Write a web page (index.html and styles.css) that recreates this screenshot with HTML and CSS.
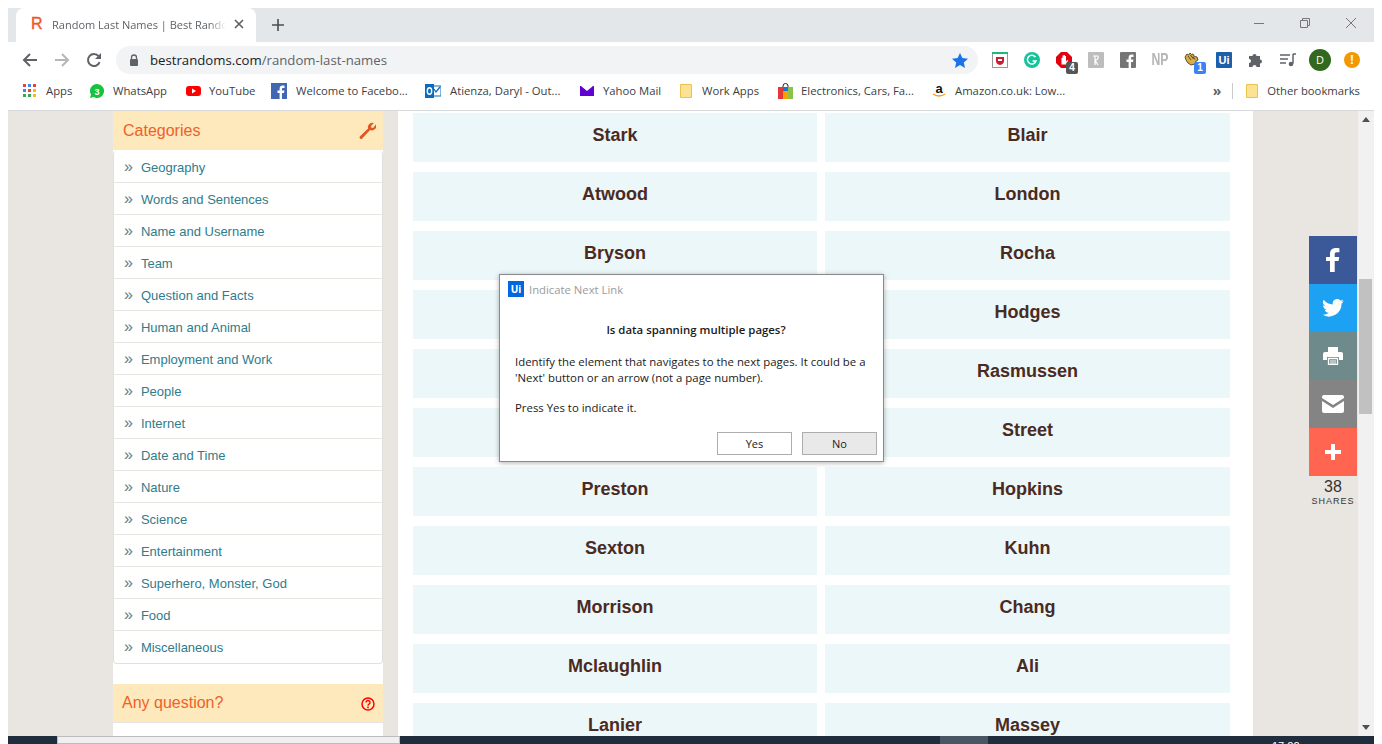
FILE: index.html
```html
<!DOCTYPE html>
<html lang="en">
<head>
    <meta charset="UTF-8">
    <title>Random Last Names | Best Randoms</title>
    <link rel="stylesheet" href="styles.css">
</head>
<body>
    <div class="window">
        <div class="tabstrip">
            <div class="tab">
                <span class="tab-favicon">R</span>
                <span class="tab-title">Random Last Names | Best Randoms</span>
                <svg class="tab-close" width="10" height="10" viewBox="0 0 10 10"><path d="M1 1l8 8M9 1l-8 8" stroke="#5f6368" stroke-width="1.7"/></svg>
            </div>
            <svg class="new-tab" width="12" height="12" viewBox="0 0 12 12"><path d="M6 0v12M0 6h12" stroke="#4a4d51" stroke-width="1.6"/></svg>
            <div class="win-controls">
                <svg width="12" height="12" viewBox="0 0 12 12"><path d="M1 6.5h10" stroke="#777" stroke-width="1"/></svg>
                <svg width="12" height="12" viewBox="0 0 12 12"><path d="M1.5 3.5h7v7h-7zM3.5 3.5v-2h7v7h-2" fill="none" stroke="#777" stroke-width="1"/></svg>
                <svg width="12" height="12" viewBox="0 0 12 12"><path d="M1 1l10 10M11 1L1 11" stroke="#777" stroke-width="1"/></svg>
            </div>
        </div>

        <div class="toolbar">
            <svg class="nav-btn" width="16" height="16" viewBox="0 0 16 16"><path d="M15 8H2M8 2L2 8l6 6" fill="none" stroke="#5f6368" stroke-width="2"/></svg>
            <svg class="nav-btn" width="16" height="16" viewBox="0 0 16 16"><path d="M1 8h13M8 2l6 6-6 6" fill="none" stroke="#b4b6b9" stroke-width="2"/></svg>
            <svg class="nav-btn" width="16" height="16" viewBox="0 0 16 16"><path d="M13.6 10.2A6 6 0 1 1 12.6 4.2" fill="none" stroke="#5f6368" stroke-width="2"/><path d="M15 1v6H9z" fill="#5f6368"/></svg>
            <div class="omnibox">
                <svg class="lock" width="10" height="12" viewBox="0 0 10 12"><path d="M2.5 5V3.5a2.5 2.5 0 0 1 5 0V5" fill="none" stroke="#5f6368" stroke-width="1.3"/><rect x="1" y="5" width="8" height="7" rx="1" fill="#5f6368"/></svg>
                <span class="url"><span class="url-host">bestrandoms.com</span>/random-last-names</span>
                <svg class="star" width="16" height="15" viewBox="0 0 16 15"><path d="M8 0l2.4 5.1 5.6.6-4.2 3.7 1.2 5.6L8 11.9 3 14.9l1.2-5.5L0 5.7l5.6-.6z" fill="#1a73e8"/></svg>
            </div>
            <div class="extensions">
                <span class="ext">
                    <svg width="16" height="16" viewBox="0 0 16 16"><rect x=".5" y=".5" width="15" height="15" fill="#fff" stroke="#999"/><rect width="16" height="2" fill="#1fb879"/><path d="M4 5h8v4q0 3-4 4-4-1-4-4z" fill="#c8202f"/><path d="M6 7h4v2H6z" fill="#fff"/></svg>
                </span>
                <span class="ext">
                    <svg width="16" height="16" viewBox="0 0 16 16"><circle cx="8" cy="8" r="8" fill="#15c39a"/><path d="M11.5 5.2A4.4 4.4 0 1 0 12 9H8.6" fill="none" stroke="#fff" stroke-width="1.5"/></svg>
                </span>
                <span class="ext">
                    <svg width="16" height="16" viewBox="0 0 16 16"><path d="M5 0h6l5 5v6l-5 5H5l-5-5V5z" fill="#e3000f"/><path d="M5.5 12.5V6h1v2.5V3.5h1.2V8V3h1.2v5V4h1.1v5.5l1.3-1.5 1 .6-2.3 3.9z" fill="#fff"/></svg>
                    <span class="badge badge-dark">4</span>
                </span>
                <span class="ext">
                    <svg width="16" height="16" viewBox="0 0 16 16"><rect width="16" height="16" rx="1" fill="#bdbdbd"/><path d="M5 4h5M7 4v9M7 8l3 5M7 8q4 0 3-4" fill="none" stroke="#fff" stroke-width="1.2"/></svg>
                </span>
                <span class="ext">
                    <svg width="16" height="16" viewBox="0 0 16 16"><rect width="16" height="16" rx="1" fill="#757575"/><path d="M11 16v-6h2l.4-2.4H11V6.2c0-.8.3-1.2 1.2-1.2h1.3V2.8C13 2.7 12.3 2.6 11.6 2.6 9.8 2.6 8.6 3.7 8.6 5.8v1.8H6.5V10h2.1v6z" fill="#fff"/></svg>
                </span>
                <span class="ext ext-np">NP</span>
                <span class="ext">
                    <svg width="16" height="16" viewBox="0 0 16 16"><path d="M1 5l2-3 1.5 1L6 1l1.5 1.5L9 2l1.5 2.5L13 5l1 3-2 1-1 3-4 1-3-2-2-3z" fill="#d8ad4a" stroke="#4d3f1c" stroke-width=".9"/><path d="M4 4l3 4M6.5 3l3 4M9 4.5l2 3" stroke="#4d3f1c" stroke-width=".9"/></svg>
                    <span class="badge badge-blue">1</span>
                </span>
                <span class="ext">
                    <span class="ui-logo ui-logo-ext">Ui</span>
                </span>
                <span class="ext">
                    <svg width="16" height="16" viewBox="0 0 16 16"><path d="M1 5h3.5a2 2 0 1 1 4 0H12v3.5a2 2 0 1 1 0 4V16H8.5a2 2 0 1 0-4 0H1v-4a2 2 0 1 0 0-4z" fill="#5f6368" transform="translate(0 -1)"/></svg>
                </span>
                <span class="ext">
                    <svg width="16" height="14" viewBox="0 0 16 14"><path d="M0 2h10M0 6h8M0 10h6" stroke="#5f6368" stroke-width="1.3"/><path d="M13 1v9.5" stroke="#5f6368" stroke-width="1.5"/><path d="M13 1h3" stroke="#5f6368" stroke-width="1.5"/><circle cx="11" cy="11" r="2.3" fill="#5f6368"/></svg>
                </span>
                <span class="ext"><span class="avatar">D</span></span>
                <span class="ext"><span class="update-dot">!</span></span>
            </div>
        </div>

        <div class="bookmarks">
            <a class="bm bm-apps">
                <svg width="14" height="14" viewBox="0 0 14 14">
                    <rect x="0" y="0" width="3" height="3" fill="#ea4335"/><rect x="5" y="0" width="3" height="3" fill="#4285f4"/><rect x="10" y="0" width="3" height="3" fill="#ea4335"/>
                    <rect x="0" y="5" width="3" height="3" fill="#4285f4"/><rect x="5" y="5" width="3" height="3" fill="#ea4335"/><rect x="10" y="5" width="3" height="3" fill="#fbbc05"/>
                    <rect x="0" y="10" width="3" height="3" fill="#34a853"/><rect x="5" y="10" width="3" height="3" fill="#34a853"/><rect x="10" y="10" width="3" height="3" fill="#fbbc05"/>
                </svg>
                Apps
            </a>
            <a class="bm bm-whatsapp">
                <svg width="14" height="14" viewBox="0 0 14 14"><path d="M7 0a7 7 0 1 1-3.4 13.1L0 14l1-3.4A7 7 0 0 1 7 0z" fill="#18c23e"/><text x="7" y="10.5" class="icon-digit">3</text></svg>
                WhatsApp
            </a>
            <a class="bm bm-youtube">
                <svg width="15" height="14" viewBox="0 0 15 14"><rect y="2" width="15" height="10" rx="3" fill="#f00"/><path d="M6 4.5L10 7l-4 2.5z" fill="#fff"/></svg>
                YouTube
            </a>
            <a class="bm bm-facebook">
                <svg width="16" height="16" viewBox="0 0 16 16"><rect width="16" height="16" fill="#4267b2"/><path d="M11 16v-6h2l.4-2.4H11V6.2c0-.8.3-1.2 1.2-1.2h1.3V2.8C13 2.7 12.3 2.6 11.6 2.6 9.8 2.6 8.6 3.7 8.6 5.8v1.8H6.5V10h2.1v6z" fill="#fff"/></svg>
                Welcome to Facebo...
            </a>
            <a class="bm bm-outlook">
                <svg width="16" height="16" viewBox="0 0 16 16"><rect x="7" y="3" width="9" height="10" fill="#fff" stroke="#0a6cc0"/><path d="M9 6l2 3 4-5" fill="none" stroke="#0a6cc0" stroke-width="1.3"/><rect y="1" width="9" height="14" fill="#0a6cc0"/><ellipse cx="4.5" cy="8" rx="2.2" ry="3.2" fill="none" stroke="#fff" stroke-width="1.4"/></svg>
                Atienza, Daryl - Out...
            </a>
            <a class="bm bm-yahoo">
                <svg width="14" height="12" viewBox="0 0 14 12"><rect y="1" width="14" height="10" fill="#6001d2"/><path d="M1 1l6 5 6-5z" fill="#fff"/></svg>
                Yahoo Mail
            </a>
            <a class="bm bm-folder">
                <svg width="12" height="14" viewBox="0 0 12 14"><path class="folder-shape" d="M.5.5h11v13H.5z"/></svg>
                Work Apps
            </a>
            <a class="bm bm-bag">
                <svg width="15" height="16" viewBox="0 0 15 16"><path d="M5 5V3a2.5 2.5 0 0 1 5 0v2" fill="none" stroke="#222" stroke-width="1"/><rect y="4" width="5" height="12" fill="#e53935"/><rect x="5" y="4" width="5" height="12" fill="#1976d2"/><rect x="10" y="4" width="5" height="12" fill="#8bc34a"/><rect x="5" y="8" width="5" height="8" fill="#ffa000"/></svg>
                Electronics, Cars, Fa...
            </a>
            <a class="bm bm-amazon">
                <svg width="14" height="16" viewBox="0 0 14 16"><text x="7" y="10" class="icon-amazon">a</text><path d="M1 11q6 4 12 0" fill="none" stroke="#f90" stroke-width="1.3"/></svg>
                Amazon.co.uk: Low...
            </a>
            <span class="bm-spacer"></span>
            <span class="bm-more">&raquo;</span>
            <span class="bm-sep"></span>
            <a class="bm bm-other">
                <svg width="12" height="14" viewBox="0 0 12 14"><path class="folder-shape" d="M.5.5h11v13H.5z"/></svg>
                Other bookmarks
            </a>
        </div>

        <div class="viewport">
            <div class="page">
                <aside class="sidebar">
                    <div class="panel-head">
                        <span>Categories</span>
                        <svg width="17" height="17" viewBox="0 0 16 16"><path d="M1 13.5L8.5 6a4.2 4.2 0 0 1 5.500-5l-2.700 2.700.4 1.600 1.600.4L16 2a4.200 4.200 0 0 1-5.500 5.500L3 15.500a1.400 1.400 0 0 1-2-2z" fill="#e2571e"/></svg>
                    </div>
                    <ul class="cat-list">
                        <li>Geography</li>
                        <li>Words and Sentences</li>
                        <li>Name and Username</li>
                        <li>Team</li>
                        <li>Question and Facts</li>
                        <li>Human and Animal</li>
                        <li>Employment and Work</li>
                        <li>People</li>
                        <li>Internet</li>
                        <li>Date and Time</li>
                        <li>Nature</li>
                        <li>Science</li>
                        <li>Entertainment</li>
                        <li>Superhero, Monster, God</li>
                        <li>Food</li>
                        <li>Miscellaneous</li>
                    </ul>
                    <div class="panel-head panel-question">
                        <span>Any question?</span>
                        <svg class="question-icon" width="14" height="14" viewBox="0 0 14 14"><circle cx="7" cy="7" r="6" fill="none" stroke="#f00" stroke-width="1.5"/><path d="M5 5.500a2 2 0 1 1 3 1.700c-.7.400-1 .8-1 1.500" fill="none" stroke="#f00" stroke-width="1.4"/><rect x="6.2" y="9.6" width="1.6" height="1.6" fill="#f00"/></svg>
                    </div>
                </aside>
                <main class="results">
                    <div class="name-card">Stark</div><div class="name-card">Blair</div>
                    <div class="name-card">Atwood</div><div class="name-card">London</div>
                    <div class="name-card">Bryson</div><div class="name-card">Rocha</div>
                    <div class="name-card"></div><div class="name-card">Hodges</div>
                    <div class="name-card"></div><div class="name-card">Rasmussen</div>
                    <div class="name-card"></div><div class="name-card">Street</div>
                    <div class="name-card">Preston</div><div class="name-card">Hopkins</div>
                    <div class="name-card">Sexton</div><div class="name-card">Kuhn</div>
                    <div class="name-card">Morrison</div><div class="name-card">Chang</div>
                    <div class="name-card">Mclaughlin</div><div class="name-card">Ali</div>
                    <div class="name-card">Lanier</div><div class="name-card">Massey</div>
                </main>
            </div>

            <div class="scrollbar">
                <span class="arrow-up"></span>
                <span class="thumb"></span>
                <span class="arrow-down"></span>
            </div>

            <div class="share-bar">
                <a class="share share-fb">
                    <svg width="14" height="24" viewBox="0 0 14 24"><path d="M4 24V13H0V9h4V6c0-4 2.4-6 5.8-6 1.700 0 3.200.1 3.600.2v4h-2.500C9 4.200 8.700 5.100 8.700 6.400V9h4.500l-.6 4H8.700v11z" fill="#fff"/></svg>
                </a>
                <a class="share share-tw">
                    <svg width="22" height="18" viewBox="0 0 24 20"><path d="M24 2.4a10 10 0 0 1-2.8.8A5 5 0 0 0 23.3.5a10 10 0 0 1-3.1 1.2 4.900 4.900 0 0 0-8.400 4.500A14 14 0 0 1 1.700.9a4.900 4.900 0 0 0 1.500 6.600 5 5 0 0 1-2.200-.6 4.900 4.900 0 0 0 3.900 4.900 5 5 0 0 1-2.200.1 4.900 4.900 0 0 0 4.600 3.400A9.900 9.900 0 0 1 0 17.300 14 14 0 0 0 21.500 5q1.500-1.100 2.500-2.600z" fill="#fff"/></svg>
                </a>
                <a class="share share-print">
                    <svg width="20" height="18" viewBox="0 0 20 18"><path d="M5 0h10v5H5z" fill="#fff"/><path d="M2 5h16a2 2 0 0 1 2 2v6h-4V10H4v3H0V7a2 2 0 0 1 2-2z" fill="#fff"/><path d="M5.5 11.5h9v6h-9z" fill="none" stroke="#fff" stroke-width="1.3"/><path d="M7 14h6M7 16h6" stroke="#fff"/></svg>
                </a>
                <a class="share share-mail">
                    <svg width="22" height="18" viewBox="0 0 22 18"><path d="M2 0h18a2 2 0 0 1 2 2v1l-11 7L0 3V2a2 2 0 0 1 2-2zM0 6l11 7 11-7v10a2 2 0 0 1-2 2H2a2 2 0 0 1-2-2z" fill="#fff"/></svg>
                </a>
                <a class="share share-more">
                    <svg width="16" height="16" viewBox="0 0 16 16"><path d="M6 0h4v6h6v4h-6v6H6v-6H0V6h6z" fill="#fff"/></svg>
                </a>
                <div class="share-count">38</div>
                <div class="share-label">SHARES</div>
            </div>

            <div class="dialog">
                <div class="dialog-title">
                    <span class="ui-logo">Ui</span>
                    <span>Indicate Next Link</span>
                </div>
                <div class="dialog-body">
                    <p class="dialog-question">Is data spanning multiple pages?</p>
                    <p>Identify the element that navigates to the next pages. It could be a<br>'Next' button or an arrow (not a page number).</p>
                    <p>Press Yes to indicate it.</p>
                </div>
                <div class="dialog-actions">
                    <button class="dlg-btn">Yes</button>
                    <button class="dlg-btn dlg-btn-no">No</button>
                </div>
            </div>
        </div>

        <div class="taskbar">
            <span class="task-search"></span>
            <span class="task-active"></span>
            <span class="task-clock">17:22</span>
        </div>
    </div>
</body>
</html>
```

FILE: styles.css
```css
* {
    box-sizing: border-box;
}
html, body {
    margin: 0;
    height: 100%;
    overflow: hidden;
    background: #fff;
}
body {
    padding: 8px 8px 0 8px;
    font-family: "Liberation Sans", Arial, sans-serif;
}
.window {
    height: 736px;
    display: flex;
    flex-direction: column;
    position: relative;
}

/* tab strip */
.tabstrip {
    height: 34px;
    background: #e4e7ea;
    display: flex;
    align-items: center;
    padding-left: 8px;
    flex: none;
}
.tab {
    width: 240px;
    height: 34px;
    background: #fff;
    border-radius: 8px 8px 0 0;
    display: flex;
    align-items: center;
    padding: 0 12px 2px 15px;
    font-family: "Open Sans", sans-serif;
    font-size: 11px;
    color: #5f6368;
}
.tab-favicon {
    font-family: "Liberation Sans", sans-serif;
    font-size: 16px;
    color: #f0562b;
    -webkit-text-stroke: .4px #f0562b;
    width: 14px;
    margin-right: 7px;
}
.tab-title {
    flex: 1;
    overflow: hidden;
    white-space: nowrap;
    -webkit-mask-image: linear-gradient(to right, #000 90%, transparent);
    mask-image: linear-gradient(to right, #000 90%, transparent);
}
.tab-close {
    margin-left: 8px;
}
.new-tab {
    margin-left: 16px;
}
.win-controls {
    margin-left: auto;
    display: flex;
    gap: 34px;
    padding-right: 17px;
    margin-top: -5px;
}

/* toolbar */
.toolbar {
    height: 36px;
    background: #fff;
    display: flex;
    align-items: center;
    padding-left: 14px;
    flex: none;
}
.nav-btn {
    margin-right: 16px;
}
.omnibox {
    width: 862px;
    height: 28px;
    margin-left: -2px;
    background: #f1f3f4;
    border-radius: 14px;
    display: flex;
    align-items: center;
    padding: 0 10px 0 13px;
}
.lock {
    margin-right: 11px;
}
.url {
    font-family: "Open Sans", sans-serif;
    font-size: 13.2px;
    color: #5f6368;
    flex: 1;
}
.url-host {
    color: #202124;
}
.extensions {
    display: flex;
    margin-left: 6px;
}
.ext {
    width: 32px;
    height: 28px;
    display: flex;
    align-items: center;
    justify-content: center;
    position: relative;
}
.ext-np {
    font-family: "Liberation Sans", sans-serif;
    font-weight: bold;
    font-size: 17px;
    color: #b5b5b5;
    transform: scaleX(.72);
}
.badge {
    position: absolute;
    right: 2px;
    bottom: 0;
    width: 12px;
    height: 12px;
    border-radius: 2px;
    color: #fff;
    font-size: 10px;
    font-weight: bold;
    line-height: 12px;
    text-align: center;
}
.badge-dark {
    background: #555;
}
.badge-blue {
    background: #3b82f6;
}
.ui-logo {
    width: 16px;
    height: 16px;
    background: #0067df;
    color: #fff;
    font-size: 10px;
    font-weight: bold;
    line-height: 16px;
    text-align: center;
    flex: none;
}
.ui-logo-ext {
    background: #1c5ea8;
    border-radius: 1px;
    font-size: 11px;
}
.avatar {
    width: 22px;
    height: 22px;
    border-radius: 50%;
    background: #33691e;
    color: #fff;
    font-family: "Open Sans", sans-serif;
    font-size: 11px;
    line-height: 22px;
    text-align: center;
}
.update-dot {
    width: 16px;
    height: 16px;
    border-radius: 50%;
    background: #f29900;
    color: #fff;
    font-size: 12px;
    font-weight: bold;
    line-height: 16px;
    text-align: center;
}

/* bookmarks bar */
.bookmarks {
    height: 33px;
    background: #fff;
    border-bottom: 1px solid #d7d9db;
    display: flex;
    align-items: center;
    padding-bottom: 7px;
    font-family: "Open Sans", sans-serif;
    font-size: 11.3px;
    color: #3c4043;
    flex: none;
    white-space: nowrap;
}
.bm {
    display: flex;
    align-items: center;
    flex: none;
}
.bm svg {
    margin-right: 9px;
}
.bm-apps {
    margin-left: 15px;
    width: 67px;
}
.bm-whatsapp {
    width: 96px;
}
.bm-youtube {
    width: 85px;
}
.bm-facebook {
    width: 154px;
}
.bm-outlook {
    width: 155px;
}
.bm-yahoo {
    width: 100px;
}
.bm-folder {
    width: 98px;
}
.bm-bag {
    width: 154px;
}
.bm-amazon {
    width: 150px;
}
.bm-youtube svg {
    margin-right: 8px;
}
.bm-folder svg {
    margin-right: 10px;
}
.bm-bag svg {
    margin-right: 8px;
}
.bm-spacer {
    flex: 1;
}
.bm-more {
    font-size: 14px;
    font-weight: bold;
    color: #5f6368;
    margin-right: 11px;
}
.bm-sep {
    width: 1px;
    height: 16px;
    background: #c8cacc;
    margin-right: 13px;
}
.bm-other {
    padding-right: 14px;
}
.folder-shape {
    fill: #fde293;
    stroke: #eac34c;
}
.icon-digit {
    font-family: "Liberation Sans", sans-serif;
    font-size: 9px;
    font-weight: bold;
    fill: #fff;
    text-anchor: middle;
}
.icon-amazon {
    font-family: "Liberation Sans", sans-serif;
    font-size: 13px;
    font-weight: bold;
    fill: #111;
    text-anchor: middle;
}

/* page area */
.viewport {
    flex: 1;
    min-height: 0;
    display: flex;
    position: relative;
    overflow: hidden;
    background: #e9e6e1;
}
.page {
    width: 1350px;
    display: flex;
    padding-left: 105px;
    height: 100%;
}
.sidebar {
    width: 270px;
    background: #fff;
    flex: none;
    height: 100%;
}
.panel-head {
    height: 39px;
    background: #fde9bb;
    color: #f0602a;
    font-size: 16px;
    display: flex;
    align-items: center;
    justify-content: space-between;
    padding: 0 7px 0 10px;
}
.panel-question {
    margin-top: 20px;
    padding-right: 8px;
    padding-left: 9px;
    border-bottom: 1px solid #e6e6e6;
}
.question-icon {
    margin-top: 2px;
}
.cat-list {
    list-style: none;
    margin: 1px 0 0 0;
    padding: 0;
    border: 1px solid #e2e0dc;
    border-top: none;
    border-radius: 4px;
    background: #fff;
}
.cat-list li {
    height: 32px;
    padding: 1px 0 0 10px;
    line-height: 29px;
    font-size: 13px;
    color: #2f7c8b;
    border-bottom: 1px solid #e8e6e1;
}
.cat-list li:last-child {
    border-bottom: none;
}
.cat-list li::before {
    content: "\00bb";
    color: #5e7f88;
    font-size: 16px;
    margin-right: 8px;
}
.results {
    width: 855px;
    margin-left: 15px;
    background: #fff;
    padding: 2px 23px 0 15px;
    display: grid;
    grid-template-columns: 404px 405px;
    grid-auto-rows: 49px;
    column-gap: 8px;
    row-gap: 10px;
    height: 100%;
    overflow: hidden;
}
.name-card {
    background: #ebf7f9;
    color: #4b2a21;
    font-size: 18px;
    font-weight: bold;
    display: flex;
    align-items: center;
    justify-content: center;
    padding-bottom: 4px;
}

/* scrollbar */
.scrollbar {
    width: 16px;
    flex: none;
    background: #f1f1f1;
    position: relative;
}
.thumb {
    position: absolute;
    left: 1px;
    top: 168px;
    width: 13px;
    height: 135px;
    background: #c1c1c1;
}
.arrow-up, .arrow-down {
    position: absolute;
    left: 4px;
    width: 0;
    height: 0;
    border-left: 4px solid transparent;
    border-right: 4px solid transparent;
}
.arrow-up {
    top: 6px;
    border-bottom: 5px solid #505050;
}
.arrow-down {
    bottom: 14px;
    border-top: 5px solid #505050;
}

/* share buttons */
.share-bar {
    position: absolute;
    left: 1301px;
    top: 125px;
    width: 48px;
}
.share {
    height: 48px;
    display: flex;
    align-items: center;
    justify-content: center;
}
.share-fb {
    background: #3b5998;
}
.share-tw {
    background: #1da1f2;
}
.share-print {
    background: #6f8a8a;
}
.share-mail {
    background: #848484;
}
.share-more {
    background: #ff6550;
}
.share-count {
    font-size: 16px;
    line-height: 18px;
    text-align: center;
    color: #333;
    margin-top: 2px;
}
.share-label {
    font-size: 9px;
    letter-spacing: 1px;
    text-align: center;
    color: #333;
    line-height: 11px;
}

/* UiPath dialog */
.dialog {
    position: absolute;
    left: 491px;
    top: 163px;
    width: 385px;
    height: 188px;
    background: #fff;
    border: 1px solid #8a8a8a;
    box-shadow: 0 1px 5px rgba(0, 0, 0, .3);
    font-family: "Open Sans", sans-serif;
    font-size: 11.4px;
    color: #1a1a1a;
}
.dialog-title {
    height: 28px;
    display: flex;
    align-items: center;
    gap: 5px;
    padding-left: 8px;
    color: #9b9b9b;
    font-size: 11.3px;
}
.dialog-body {
    padding: 0 15px;
}
.dialog-body p {
    margin: 0 0 14px 0;
    line-height: 16px;
}
.dialog-body .dialog-question {
    text-align: center;
    font-weight: 600;
    padding: 19px 0 0 9px;
    margin-bottom: 16px;
}
.dialog-actions {
    position: absolute;
    right: 6px;
    bottom: 6px;
    display: flex;
    gap: 10px;
}
.dlg-btn {
    width: 75px;
    height: 23px;
    background: #fff;
    border: 1px solid #adadad;
    font-family: "Open Sans", sans-serif;
    font-size: 11px;
    color: #1a1a1a;
    padding: 0;
}
.dlg-btn-no {
    background: #e9e9e9;
}

/* windows taskbar, mostly cut off by the photo */
.taskbar {
    position: absolute;
    left: 0;
    right: 0;
    top: 728px;
    height: 8px;
    background: #1f2d3d;
    overflow: hidden;
}
.task-search {
    position: absolute;
    left: 49px;
    top: 0;
    width: 343px;
    height: 8px;
    background: #f0f0f0;
    border: 1px solid #bdbdbd;
}
.task-active {
    position: absolute;
    left: 932px;
    top: 0;
    width: 48px;
    height: 8px;
    background: #4a5663;
}
.task-clock {
    position: absolute;
    left: 1264px;
    top: 4px;
    font-size: 11px;
    line-height: 13px;
    color: #fff;
}
```
